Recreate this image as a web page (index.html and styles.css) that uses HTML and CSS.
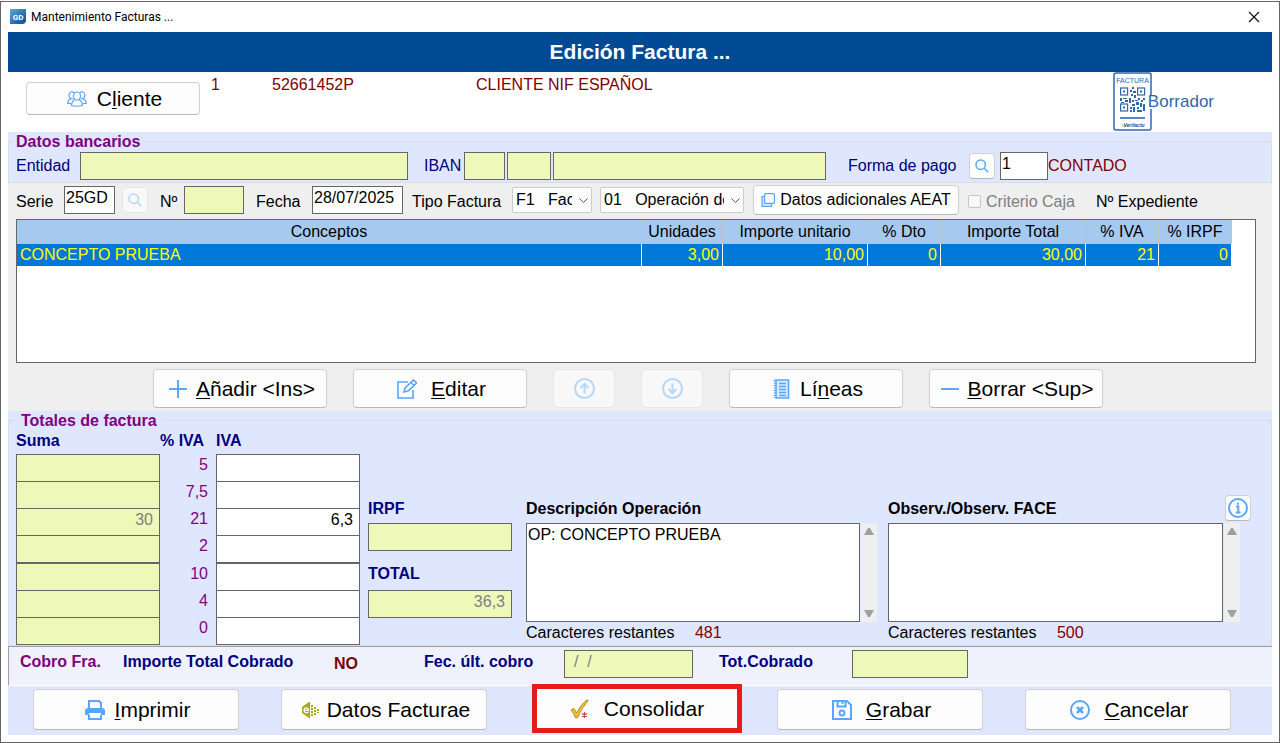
FILE: index.html
```html
<!DOCTYPE html>
<html lang="es">
<head>
    <meta charset="utf-8">
    <title>Mantenimiento Facturas ...</title>
    <link rel="stylesheet" href="styles.css">
</head>
<body>
<div class="window">
    <header class="title-bar">
        <svg class="title-bar__logo" width="16" height="16" viewBox="0 0 16 16">
            <defs>
                <linearGradient id="logo-fill" x1="0" y1="0" x2="1" y2="1">
                    <stop offset="0" stop-color="#5aa9dc"/>
                    <stop offset="1" stop-color="#0a4a8c"/>
                </linearGradient>
            </defs>
            <path d="M0 0h16v11q0 4-4 4H0z" fill="url(#logo-fill)"/>
            <text x="8" y="11" class="title-bar__logo-text">GD</text>
        </svg>
        <span class="title-bar__text">Mantenimiento Facturas ...</span>
        <button type="button" class="title-bar__close" aria-label="Cerrar">
            <svg width="12" height="12" viewBox="0 0 12 12"><path d="M1 1l10 10M11 1L1 11" stroke="#111" stroke-width="1.2"/></svg>
        </button>
    </header>

    <form class="invoice">
        <h1 class="invoice__title">Edición Factura ...</h1>

        <section class="client">
            <button type="button" class="button button--client">
                <svg class="icon" width="20" height="16" viewBox="0 0 20 16">
                    <path stroke-width="1.2" d="M6.500 5a3.500 4 0 0 1 7 0a3.500 4 0 0 1-7 0zM8 8.500C6 9.500 4.700 11 4.500 14.500q5.500 1.500 11 0C15.300 11 14 9.500 12 8.500M6 7.500A3 3.400 0 1 1 7 1.700M14 7.500A3 3.400 0 1 0 13 1.700M4 7.500C2 8.500.8 10 .7 12.500h3.300M16 7.500c2 1 3.200 2.500 3.300 5H16"/>
                </svg>
                <span>C<u>l</u>iente</span>
            </button>
            <output>1</output>
            <output>52661452P</output>
            <output>CLIENTE NIF ESPAÑOL</output>
            <div class="draft">
                <svg class="draft__qr" width="39" height="59" viewBox="0 0 39 59">
                    <rect x="1" y="1" width="37" height="57" rx="2" fill="#fff" stroke="#2f66ae" stroke-width="1.500"/>
                    <text x="19.500" y="11" class="draft__caption">FACTURA</text>
                    <g fill="none" stroke="#2f66ae" stroke-width="1.200">
                        <rect x="7.600" y="16" width="7" height="7"/>
                        <rect x="24.600" y="16" width="7" height="7"/>
                        <rect x="7.600" y="32" width="7" height="7"/>
                    </g>
                    <path fill="#2f66ae" d="M10 18.500h2v2h-2zM27 18.500h2v2h-2zM10 34.500h2v2h-2zM19 15h2v2h-2zM17 18h2v2h-2zM20 19h3v2h-3zM18 22h2v2h-2zM21 23h2v3h-2zM7 26h2v3H7zM10 26h4v1h-4zM12 28h3v2h-3zM8 30h3v1H8zM16 26h2v5h-2zM19 28h2v2h-2zM22 28h3v1h-3zM25 26h2v2h-2zM28 28h2v2h-2zM30 26h2v2h-2zM23 30h3v3h-3zM27 31h2v4h-2zM19 32h3v2h-3zM17 35h2v2h-2zM20 35h2v5h-2zM24 35h2v2h-2zM24 38h5v2h-5zM30 32h2v7h-2zM17 38h2v2h-2z"/>
                    <path d="M7 46h25" stroke="#2f66ae" stroke-width="1.600"/>
                    <path d="M9 52l2 3 2-2" fill="none" stroke="#d9b23a"/>
                    <text x="21" y="55" class="draft__signature">Verifactu</text>
                </svg>
                <span class="draft__label">Borrador</span>
            </div>
        </section>

        <section class="panel">
            <fieldset class="group">
                <legend class="group__legend">Datos bancarios</legend>
                <div class="bank">
                    <label for="entity">Entidad</label>
                    <input id="entity" class="field field--readonly bank__entity" readonly>
                    <label for="iban">IBAN</label>
                    <input id="iban" class="field field--readonly bank__iban" readonly>
                    <input class="field field--readonly bank__control" aria-label="Dígitos de control" readonly>
                    <input class="field field--readonly bank__account" aria-label="Cuenta" readonly>
                    <label for="payment">Forma de pago</label>
                    <button type="button" class="button button--square" aria-label="Buscar forma de pago">
                        <svg class="icon" width="14" height="14" viewBox="0 0 14 14"><circle cx="5.700" cy="5.700" r="4.700"/><path d="M9.200 9.200l4 4"/></svg>
                    </button>
                    <input id="payment" class="field" value="1">
                    <output>CONTADO</output>
                </div>
            </fieldset>
        </section>

        <section class="lines">
            <div class="invoice-data">
                <label for="series">Serie</label>
                <input id="series" class="field invoice-data__series" value="25GD">
                <button type="button" class="button button--square" aria-label="Buscar serie" disabled>
                    <svg class="icon" width="14" height="14" viewBox="0 0 14 14"><circle cx="5.700" cy="5.700" r="4.700"/><path d="M9.200 9.200l4 4"/></svg>
                </button>
                <label for="number">Nº</label>
                <input id="number" class="field field--readonly invoice-data__number" readonly>
                <label for="date">Fecha</label>
                <input id="date" class="field invoice-data__date" value="28/07/2025">
                <label for="type">Tipo Factura</label>
                <div class="combo invoice-data__type">
                    <select id="type" class="combo__select">
                        <option>F1 &nbsp; Factura</option>
                    </select>
                    <svg class="combo__arrow" width="9" height="6" viewBox="0 0 9 6"><path d="M.5.5l4 4 4-4"/></svg>
                </div>
                <div class="combo invoice-data__regime">
                    <select class="combo__select" aria-label="Clave de régimen">
                        <option>01 &nbsp; Operación de régimen general</option>
                    </select>
                    <svg class="combo__arrow" width="9" height="6" viewBox="0 0 9 6"><path d="M.5.5l4 4 4-4"/></svg>
                </div>
                <button type="button" class="button button--aeat">
                    <svg class="icon" width="14" height="14" viewBox="0 0 14 14"><path stroke-width="1.2" d="M3.500 3.500H1v10h9.500v-3" fill="#cfe4fb"/><rect x="3.600" y=".6" width="9.800" height="9.800" rx="1" fill="#fdfdfd" stroke-width="1.2"/></svg>
                    <span>Datos adicionales AEAT</span>
                </button>
                <label class="check">
                    <input type="checkbox" class="check__box" disabled>
                    <span>Criterio Caja</span>
                </label>
                <span>Nº Expediente</span>
            </div>

            <div class="grid-box">
                <table class="concepts">
                    <thead>
                    <tr>
                        <th>Conceptos</th>
                        <th class="concepts__units">Unidades</th>
                        <th class="concepts__amount">Importe unitario</th>
                        <th class="concepts__percent">% Dto</th>
                        <th class="concepts__amount">Importe Total</th>
                        <th class="concepts__percent">% IVA</th>
                        <th class="concepts__percent">% IRPF</th>
                    </tr>
                    </thead>
                    <tbody>
                    <tr>
                        <td>CONCEPTO PRUEBA</td>
                        <td>3,00</td>
                        <td>10,00</td>
                        <td>0</td>
                        <td>30,00</td>
                        <td>21</td>
                        <td>0</td>
                    </tr>
                    </tbody>
                </table>
            </div>

            <div class="line-actions">
                <button type="button" class="button button--line button--tight">
                    <svg class="icon icon--bold" width="20" height="20" viewBox="0 0 20 20"><path d="M10 1v18M1 10h18"/></svg>
                    <span><u>A</u>ñadir &lt;Ins&gt;</span>
                </button>
                <button type="button" class="button button--line button--wide">
                    <svg class="icon" width="20" height="20" viewBox="0 0 20 20"><path d="M11 3H1v16h15v-8M7 13l1-4 8.500-8 3 3-8.500 8zM14 3.500l3 3" stroke-width="1.600"/></svg>
                    <span><u>E</u>ditar</span>
                </button>
                <button type="button" class="button button--move" aria-label="Subir línea" disabled>
                    <svg class="icon icon--bold" width="21" height="21" viewBox="0 0 21 21"><circle cx="10.500" cy="10.500" r="9.500"/><path d="M10.500 15.500V6M6.500 10l4-4 4 4"/></svg>
                </button>
                <button type="button" class="button button--move" aria-label="Bajar línea" disabled>
                    <svg class="icon icon--bold" width="21" height="21" viewBox="0 0 21 21"><circle cx="10.500" cy="10.500" r="9.500"/><path d="M10.500 5.500V15M6.500 11l4 4 4-4"/></svg>
                </button>
                <button type="button" class="button button--line">
                    <svg class="icon" width="18" height="20" viewBox="0 0 18 20"><rect x="4" y="1" width="12.500" height="18" fill="#d9eafc"/><path d="M3 1v18" stroke-dasharray="1 1.500" stroke-width="3"/><path d="M7 4.500h7M7 7.500h7M7 10.500h7M7 13.500h7M7 16.500h7"/></svg>
                    <span>Lí<u>n</u>eas</span>
                </button>
                <button type="button" class="button button--line button--tight">
                    <svg class="icon icon--bold" width="18" height="20" viewBox="0 0 18 20"><path d="M0 10h18"/></svg>
                    <span><u>B</u>orrar &lt;Sup&gt;</span>
                </button>
            </div>
        </section>

        <section class="panel">
            <fieldset class="group">
                <legend class="group__legend group__legend--inset">Totales de factura</legend>
                <div class="totals">
                    <table class="taxes">
                        <thead>
                        <tr>
                            <th class="taxes__amount">Suma</th>
                            <th class="taxes__rate">% IVA</th>
                            <th class="taxes__amount">IVA</th>
                        </tr>
                        </thead>
                        <tbody>
                        <tr>
                            <td><input class="field field--readonly field--number" aria-label="Suma 5" readonly></td>
                            <td class="taxes__rate">5</td>
                            <td><input class="field field--number" aria-label="IVA 5"></td>
                        </tr>
                        <tr>
                            <td><input class="field field--readonly field--number" aria-label="Suma 7,5" readonly></td>
                            <td class="taxes__rate">7,5</td>
                            <td><input class="field field--number" aria-label="IVA 7,5"></td>
                        </tr>
                        <tr>
                            <td><input class="field field--readonly field--number" aria-label="Suma 21" value="30" readonly></td>
                            <td class="taxes__rate">21</td>
                            <td><input class="field field--number" aria-label="IVA 21" value="6,3"></td>
                        </tr>
                        <tr class="taxes__split">
                            <td><input class="field field--readonly field--number" aria-label="Suma 2" readonly></td>
                            <td class="taxes__rate">2</td>
                            <td><input class="field field--number" aria-label="IVA 2"></td>
                        </tr>
                        <tr>
                            <td><input class="field field--readonly field--number" aria-label="Suma 10" readonly></td>
                            <td class="taxes__rate">10</td>
                            <td><input class="field field--number" aria-label="IVA 10"></td>
                        </tr>
                        <tr>
                            <td><input class="field field--readonly field--number" aria-label="Suma 4" readonly></td>
                            <td class="taxes__rate">4</td>
                            <td><input class="field field--number" aria-label="IVA 4"></td>
                        </tr>
                        <tr>
                            <td><input class="field field--readonly field--number" aria-label="Suma 0" readonly></td>
                            <td class="taxes__rate">0</td>
                            <td><input class="field field--number" aria-label="IVA 0"></td>
                        </tr>
                        </tbody>
                    </table>

                    <div class="totals__sums">
                        <label class="totals__label" for="irpf">IRPF</label>
                        <input id="irpf" class="field field--readonly field--number" readonly>
                        <label class="totals__label totals__label--total" for="total">TOTAL</label>
                        <input id="total" class="field field--readonly field--number" value="36,3" readonly>
                    </div>

                    <div class="note">
                        <div class="note__head"><label for="description">Descripción Operación</label></div>
                        <div class="note__body">
                            <textarea id="description" class="note__text">OP: CONCEPTO PRUEBA</textarea>
                            <div class="scroll">
                                <svg width="10" height="7" viewBox="0 0 10 7"><path d="M4 0h2l4 7H0z"/></svg>
                                <svg width="10" height="7" viewBox="0 0 10 7"><path d="M0 0h10L6 7H4z"/></svg>
                            </div>
                        </div>
                        <div class="note__count">Caracteres restantes <output>481</output></div>
                    </div>

                    <div class="note">
                        <div class="note__head">
                            <label for="remarks">Observ./Observ. FACE</label>
                            <button type="button" class="button button--square" aria-label="Información">
                                <svg class="icon icon--bold" width="20" height="20" viewBox="0 0 20 20"><circle cx="10" cy="10" r="9"/><path d="M8 8.500h2.300V14M7.800 14.500h4.600M9 5.700h2"/></svg>
                            </button>
                        </div>
                        <div class="note__body">
                            <textarea id="remarks" class="note__text"></textarea>
                            <div class="scroll">
                                <svg width="10" height="7" viewBox="0 0 10 7"><path d="M4 0h2l4 7H0z"/></svg>
                                <svg width="10" height="7" viewBox="0 0 10 7"><path d="M0 0h10L6 7H4z"/></svg>
                            </div>
                        </div>
                        <div class="note__count">Caracteres restantes <output>500</output></div>
                    </div>
                </div>
            </fieldset>
        </section>

        <section class="payment">
            <h2 class="payment__title">Cobro Fra.</h2>
            <span>Importe Total Cobrado</span>
            <output class="payment__status">NO</output>
            <label for="last-payment">Fec. últ. cobro</label>
            <input id="last-payment" class="field field--readonly payment__date" value="/  /" readonly>
            <label for="collected">Tot.Cobrado</label>
            <input id="collected" class="field field--readonly payment__collected" readonly>
        </section>

        <footer class="actions">
            <button type="button" class="button button--action">
                <svg class="icon" width="20" height="20" viewBox="0 0 20 20"><path d="M4 9V1h10l2 2v6M4 15v4h12v-4" stroke-width="2"/><path d="M0 15v-4q0-3 3-3h14q3 0 3 3v4h-4v-2H4v2z" fill="#58a6ff" stroke="none"/></svg>
                <span><u>I</u>mprimir</span>
            </button>
            <button type="button" class="button button--action button--tight">
                <svg width="18" height="16" viewBox="0 0 18 16">
                    <path d="M1 5l7-5h1v16H8l-7-5z" fill="#a5ab12"/>
                    <path d="M2.500 8.300h5C7.500 5 3 5 3 8.300c0 2.700 3 3.200 4.500 1.700" fill="none" stroke="#fff" stroke-width="1.200"/>
                    <path d="M11 3v11M14 5v8M17 7v4" stroke="#a5ab12" stroke-width="2" stroke-dasharray="2 1"/>
                </svg>
                <span>Datos Facturae</span>
            </button>
            <button type="button" class="button button--action button--wide button--highlight">
                <svg width="20" height="20" viewBox="0 0 20 20">
                    <path d="M1 11l3-1.500 2.500 4.500Q11 5 17 .8l1.200.8Q11.500 9 7.500 18.800H5.500Q4 14 1 11z" fill="#fcc21b" stroke="#8f7430" stroke-width=".8"/>
                    <path d="M14.500 13v6M12 14.500l5 3M17 14.500l-5 3" stroke="#d0405a" stroke-width="1.200"/>
                </svg>
                <span>Consolidar</span>
            </button>
            <button type="button" class="button button--action button--wide">
                <svg class="icon icon--bold" width="20" height="20" viewBox="0 0 20 20"><path d="M1 1h14l4 4v14H1zM5.500 1v5.500h8V1M10.500 1v3"/><circle cx="10" cy="13" r="2.500"/></svg>
                <span><u>G</u>rabar</span>
            </button>
            <button type="button" class="button button--action button--wide">
                <svg class="icon icon--bold" width="20" height="20" viewBox="0 0 20 20"><circle cx="10" cy="10" r="9"/><path d="M7 7l6 6M13 7l-6 6" stroke-width="2.500"/></svg>
                <span><u>C</u>ancelar</span>
            </button>
        </footer>
    </form>
</div>
</body>
</html>
```

FILE: styles.css
```css
* {
    box-sizing: border-box;
}

html, body {
    margin: 0;
    background-color: #ffffff;
    color: #000000;
    font-family: "Liberation Sans", Arial, sans-serif;
    font-size: 16px;
    line-height: 20px;
}

button, input, select, textarea {
    color: #000000;
    font: inherit;
}

svg {
    flex: none;
}

u {
    text-decoration-thickness: 1px;
    text-underline-offset: 2px;
}

output {
    color: #800000;
}

.window {
    margin-top: 1px;
    padding: 0 7px 7px;
    border: 1px solid #666666;
}

/* title bar */

.title-bar {
    display: flex;
    align-items: center;
    height: 30px;
    padding: 0 12px 0 2px;
    font-family: Roboto, "Open Sans", sans-serif;
    font-size: 12px;
}

.title-bar__logo-text {
    fill: #ffffff;
    font-size: 8px;
    font-weight: bold;
    text-anchor: middle;
}

.title-bar__text {
    flex: 1;
    margin-left: 5px;
}

.title-bar__close {
    display: flex;
    padding: 0;
    border: 0;
    background: none;
}

.invoice__title {
    margin: 0;
    background-color: #004a94;
    color: #ffffff;
    font-size: 21px;
    line-height: 40px;
    text-align: center;
}

/* buttons and fields */

.button {
    display: flex;
    align-items: center;
    justify-content: center;
    gap: 10px;
    padding: 0;
    border: 1px solid #d0d0d0;
    border-bottom-color: #b8b8b8;
    border-radius: 4px;
    background-color: #fdfdfd;
    font-size: 21px;
    white-space: nowrap;
}

.button:disabled {
    border-color: #e6e6e6;
    background-color: #f8f8f8;
}

.button:disabled .icon {
    opacity: 0.4;
}

.button--tight {
    gap: 8px;
}

.button--wide {
    gap: 14px;
}

.button--client {
    width: 174px;
    height: 33px;
    margin-top: 10px;
    padding-left: 3px;
}

.button--square {
    width: 26px;
    height: 26px;
}

.button--aeat {
    gap: 5px;
    width: 206px;
    height: 30px;
    font-size: 16px;
}

.button--line {
    width: 174px;
    height: 39px;
    padding-left: 3px;
}

.button--move {
    width: 62px;
    height: 39px;
}

.button--action {
    width: 206px;
    height: 41px;
    padding-left: 3px;
}

.button--highlight {
    position: relative;
    width: 210px;
    height: 49px;
    margin: -5px -7px -3px 3px;
    padding-left: 0;
    border: 5px solid #e81b1b;
    border-radius: 0;
}

.icon {
    fill: none;
    stroke: #58a6ff;
    stroke-width: 1.5;
}

.icon--bold {
    stroke-width: 2;
}

.field {
    display: block;
    width: 100%;
    height: 28px;
    padding: 0 1px 4px;
    border: 1px solid #666666;
    border-radius: 0;
    background-color: #ffffff;
}

.field--readonly {
    background-color: #eef8b8;
    color: #808080;
}

.field--number {
    padding-right: 6px;
    text-align: right;
}

/* client */

.client {
    display: grid;
    grid-template-columns: 185px 61px 204px 1fr auto;
    align-items: start;
    height: 60px;
    padding: 0 58px 0 18px;
}

.client output {
    padding-top: 3px;
}

.draft {
    display: flex;
    align-items: center;
    color: #2f66ae;
    font-size: 17px;
}

.draft__caption {
    fill: #2f66ae;
    font-size: 7px;
    text-anchor: middle;
}

.draft__signature {
    fill: #1d4f91;
    font-size: 5px;
    font-style: italic;
    font-weight: bold;
    text-anchor: middle;
}

/* the label lies over the edge of the stamp */
.draft__label {
    margin-left: -4px;
    background: linear-gradient(#ffffff, #ffffff) center / 100% 14px no-repeat;
}

/* group boxes */

.panel {
    background-color: #dfe7ff;
}

.group {
    min-width: 0;
    margin: 0;
    padding: 0 7px;
    border: 1px solid #d9dce2;
}

.group__legend {
    height: 18px;
    margin-left: -2px;
    padding: 0 2px;
    color: #800080;
    font-weight: bold;
}

.group__legend--inset {
    margin-left: 0;
    padding: 0 5px;
}

.bank {
    display: grid;
    grid-template-columns: 64px 344fr 40px 43px 46px 295fr 121px 31px 48px 216fr;
    align-items: center;
    padding: 2px 0;
    color: #000080;
}

.bank__entity {
    width: calc(100% - 16px);
}

.bank__iban {
    width: 41px;
}

.bank__control {
    width: 44px;
}

.bank__account {
    width: calc(100% - 22px);
}

/* invoice data and lines */

.lines {
    padding: 2px 16px 3px 8px;
    background-color: #efefef;
}

.invoice-data {
    display: grid;
    grid-template-columns: 48px 58px 38px 24px 72px 56px 100px 100px 88px 153px 215px 128px auto;
    align-items: center;
    height: 34px;
    padding-bottom: 4px;
    white-space: nowrap;
}

.invoice-data > label, .invoice-data > span {
    padding-top: 3px;
}

.invoice-data__series {
    width: 51px;
}

.invoice-data__number {
    width: 60px;
}

.invoice-data__date {
    width: 91px;
}

.invoice-data__type {
    width: 80px;
}

.invoice-data__regime {
    width: 144px;
}

.combo {
    position: relative;
}

.combo__select {
    display: block;
    width: 100%;
    height: 26px;
    padding: 0 19px 0 3px;
    border: 1px solid #cccccc;
    border-radius: 2px;
    background-color: #fdfdfd;
    appearance: none;
}

.combo__arrow {
    position: absolute;
    top: 11px;
    right: 4px;
    fill: none;
    stroke: #555555;
}

.check {
    display: flex;
    align-items: center;
    gap: 5px;
    color: #808080;
}

.check__box {
    width: 13px;
    height: 13px;
    margin: 0;
    border: 1px solid #c4c4c4;
    border-radius: 2px;
    background-color: #f8f8f8;
    appearance: none;
}

.grid-box {
    height: 144px;
    padding-right: 23px;
    border: 1px solid #666666;
    background-color: #ffffff;
}

.concepts {
    width: 100%;
    border-collapse: separate;
    border-spacing: 0;
    table-layout: fixed;
}

.concepts th {
    height: 24px;
    padding: 0;
    border-right: 1px solid #c0c0c0;
    border-bottom: 1px solid #c0c0c0;
    background-color: #a6c9ef;
    font-weight: normal;
}

.concepts td {
    height: 22px;
    padding: 0 3px;
    border-right: 1px solid #ffffff;
    background-color: #0078d7;
    color: #ffff00;
    text-align: right;
}

.concepts td:first-child {
    text-align: left;
}

.concepts__units {
    width: 81px;
}

.concepts__amount {
    width: 145px;
}

.concepts__percent {
    width: 73px;
}

.line-actions {
    display: flex;
    justify-content: center;
    gap: 26px;
    padding: 6px 16px 0 0;
}

/* totals */

.totals {
    display: grid;
    grid-template-columns: 352px 158px 362fr 363fr;
    padding: 0 13px 1px 0;
    color: #000080;
}

.taxes {
    width: 344px;
    border-spacing: 0;
    table-layout: fixed;
}

.taxes th {
    height: 25px;
    padding: 0 0 1px;
    text-align: left;
}

.taxes td {
    height: 27px;
    padding: 0;
    vertical-align: top;
}

/* neighbouring fields share one border line */
.taxes .field {
    margin-bottom: -1px;
}

.taxes .taxes__split td {
    height: 28px;
}

.taxes__amount {
    width: 144px;
}

.taxes__rate {
    width: 56px;
}

.taxes td.taxes__rate {
    padding: 1px 8px 0 0;
    color: #800080;
    text-align: right;
}

.totals__sums {
    width: 144px;
    padding-top: 70px;
}

.totals__label {
    display: block;
    margin-bottom: 4px;
    font-weight: bold;
}

.totals__label--total {
    margin: 13px 0 6px;
}

.note {
    padding-top: 70px;
    color: #000000;
}

.note__head {
    display: flex;
    justify-content: space-between;
    height: 20px;
    margin-bottom: 4px;
    font-weight: bold;
}

.note__head .button {
    margin-top: -4px;
}

.note__body {
    display: flex;
    gap: 1px;
    margin: 0 11px 1px 0;
}

.note__text {
    flex: 1;
    min-width: 0;
    height: 99px;
    padding: 1px;
    border: 1px solid #666666;
    background-color: #ffffff;
    overflow: hidden;
    resize: none;
}

.scroll {
    display: flex;
    flex-direction: column;
    align-items: center;
    justify-content: space-between;
    width: 16px;
    padding: 5px 0;
    background-color: #efefef;
    fill: #a0a0a0;
}

.note__count output {
    margin-left: 16px;
}

/* payment */

.payment {
    display: grid;
    grid-template-columns: 103px 211px 90px 140px 155px 133px auto;
    align-items: start;
    height: 40px;
    padding: 3px 0 0 11px;
    border: 1px solid #a0a0a0;
    border-right: 0;
    border-bottom-color: #ffffff;
    background-color: #eff2fc;
    color: #000080;
    font-weight: bold;
    line-height: 24px;
}

.payment__title {
    margin: 0;
    color: #800080;
    font-size: 16px;
    line-height: 24px;
}

.payment__status {
    padding-top: 2px;
}

.payment .field {
    font-weight: normal;
}

.payment .payment__date {
    width: 129px;
    padding-left: 9px;
}

.payment__collected {
    width: 116px;
}

/* bottom actions */

.actions {
    display: flex;
    gap: 42px;
    padding: 3px 25px 5px;
    background-color: #dfe7ff;
}
```
